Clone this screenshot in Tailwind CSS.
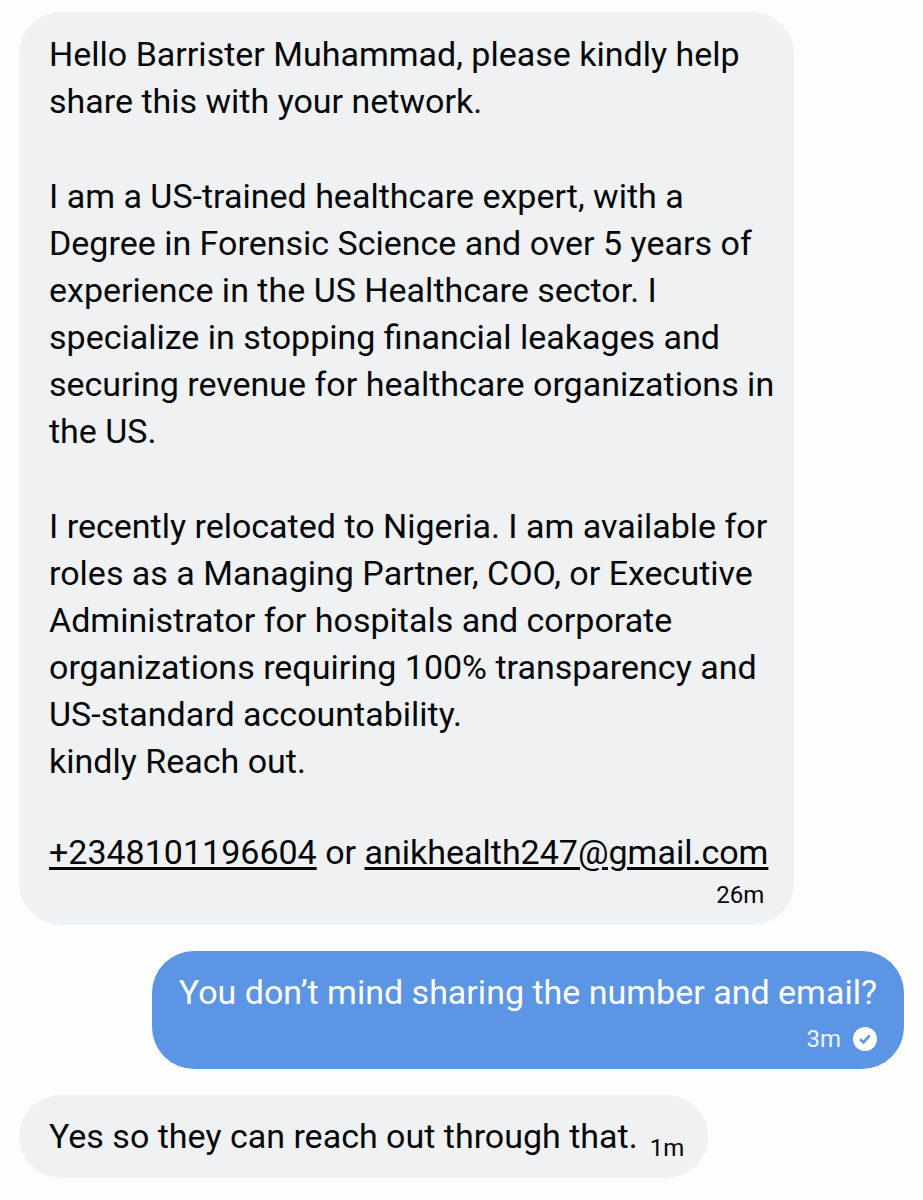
<!DOCTYPE html>
<html lang="en">
<head>
    <meta charset="UTF-8">
    <meta name="viewport" content="width=device-width, initial-scale=1.0">
    <title>Messages</title>
    <script src="https://cdn.jsdelivr.net/npm/@tailwindcss/browser@4"></script>
</head>
<body class="bg-[#fdfdfd] font-['Roboto',sans-serif] text-[#050709]">
    <!-- Conversation -->
    <main class="flex flex-col gap-[26px] px-[19px] pt-3 pb-[22px]">
        <!-- Received -->
        <div class="self-start w-[87.6%] rounded-[42px] bg-[#eff1f3] pl-[30px] pr-5 pt-[19px] pb-[14px]">
            <div class="text-[34px] leading-[47px]">
                <p>Hello Barrister Muhammad, please kindly help<br>share this with your network.</p>
                <p class="mt-12">I am a US-trained healthcare expert, with a<br>Degree in Forensic Science and over 5 years of<br>experience in the US Healthcare sector. I<br>specialize in stopping financial leakages and<br>securing revenue for healthcare organizations in<br>the US.</p>
                <p class="mt-12">I recently relocated to Nigeria. I am available for<br>roles as a Managing Partner, COO, or Executive<br>Administrator for hospitals and corporate<br>organizations requiring 100% transparency and<br>US-standard accountability.<br>kindly Reach out.</p>
                <p class="mt-11"><a href="tel:+2348101196604" class="underline decoration-[3px] underline-offset-[3px]">+2348101196604</a> or <a href="mailto:anikhealth247@gmail.com" class="underline decoration-[3px] underline-offset-[3px]">anikhealth247@gmail.com</a></p>
            </div>
            <p class="mt-[3px] mr-[10px] text-right text-[24px] leading-[32px]">26m</p>
        </div>

        <!-- Sent -->
        <div class="self-end rounded-[42px] bg-[#5b95e3] px-[27px] pt-[18px] pb-[14px] text-white">
            <p class="text-[34px] leading-[47px]">You don’t mind sharing the number and email?</p>
            <div class="mt-[7px] flex items-center justify-end gap-3 text-[24px] leading-[32px]">
                <span class="text-white/90">3m</span>
                <!-- Delivered -->
                <svg class="size-6" viewBox="0 0 24 24" fill="none" aria-label="Delivered">
                    <circle cx="12" cy="12" r="12" fill="#fff" />
                    <path d="M7.2 12.2l3.4 3.2 6-7" stroke="#5b95e3" stroke-width="2.6" />
                </svg>
            </div>
        </div>

        <!-- Received -->
        <div class="self-start flex items-end gap-3 rounded-[42px] bg-[#eff1f3] pl-[30px] pr-6 pt-[18px] pb-[14px]">
            <p class="pb-1 text-[34px] leading-[47px]">Yes so they can reach out through that.</p>
            <span class="text-[24px] leading-[32px]">1m</span>
        </div>
    </main>
</body>
</html>
